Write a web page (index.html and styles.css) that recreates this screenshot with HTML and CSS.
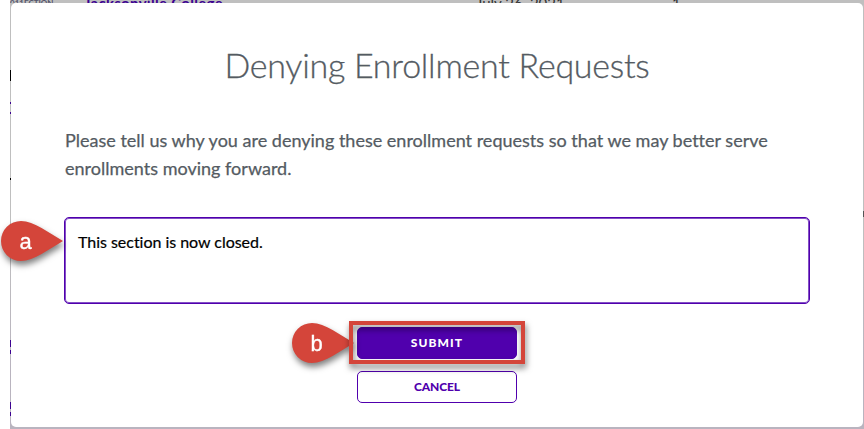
FILE: index.html
```html
<!DOCTYPE html>
<html lang="en">
<head>
    <meta charset="UTF-8">
    <meta name="viewport" content="width=device-width, initial-scale=1.0">
    <title>Denying Enrollment Requests</title>
    <link rel="stylesheet" href="styles.css">
</head>
<body>
    <div class="backdrop">
        <div class="table-row">
            <span class="row-code">011ECTION</span>
            <span class="row-school">Jacksonville College</span>
            <span class="row-date">July 26, 2021</span>
            <span class="row-count">1</span>
        </div>

        <main class="modal">
            <h1>Denying Enrollment Requests</h1>
            <p>Please tell us why you are denying these enrollment requests so that we may better serve enrollments moving forward.</p>
            <div class="field">
                <textarea spellcheck="false">This section is now closed.</textarea>
                <svg class="callout callout-a" width="72" height="56" viewBox="0 0 72 56">
                    <path d="M63 24C49 16 34 4 21 4a20 20 0 0 0 0 40c13 0 28-12 42-20z"/>
                    <text x="25.5" y="32" text-anchor="middle">a</text>
                </svg>
            </div>
            <div class="actions">
                <div class="submit-wrap">
                    <button class="submit">SUBMIT</button>
                    <svg class="callout callout-b" width="72" height="56" viewBox="0 0 72 56">
                        <path d="M63 24C49 16 34 4 21 4a20 20 0 0 0 0 40c13 0 28-12 42-20z"/>
                        <text x="25.5" y="32" text-anchor="middle">b</text>
                    </svg>
                    <div class="highlight"></div>
                </div>
                <button class="cancel">CANCEL</button>
            </div>
        </main>

        <!-- Bits of the table that stick out past the modal -->
        <i class="peek peek-heading"></i>
        <i class="peek peek-link"></i>
        <i class="peek peek-link peek-link-end"></i>
        <i class="peek peek-text"></i>
        <i class="peek peek-row"></i>
        <i class="peek peek-row peek-row-last"></i>
        <i class="peek peek-right"></i>
    </div>
</body>
</html>
```

FILE: styles.css
```css
/* General */
* {
    box-sizing: border-box;
}

body {
    margin: 0;
    background-color: #fff;
    color: #545b62;
    font-family: Lato, "Open Sans", sans-serif;
    font-variant-ligatures: none;
    overflow: hidden;
}

.backdrop {
    position: relative;
    height: 429px;
    margin-left: 10px;
    padding: 0 1px 2px;
    background: linear-gradient(#bfbfbf 55%, #b9b4bf 85%);
}

/* Table row behind the modal */
.table-row {
    display: grid;
    grid-template-columns: 74px 392px 196px 1fr;
    height: 3px;
    margin-left: -1px;
    overflow: hidden;
    line-height: 16px;
    white-space: nowrap;
}

.table-row span {
    margin-top: -5px;
}

.row-code {
    color: #55556b;
    font-size: 8px;
    font-weight: bold;
}

.row-school {
    color: #3c0291;
    font-size: 15px;
    font-weight: bold;
    letter-spacing: 0.3px;
}

.row-date,
.row-count {
    color: #333;
    font-size: 15px;
}

/* Modal */
.modal {
    height: 424px;
    padding: 40px 53px 0;
    background-color: #fff;
    border-radius: 5px;
}

h1 {
    margin: 0;
    font-size: 34px;
    font-weight: 300;
    line-height: 44px;
    text-align: center;
    letter-spacing: -0.25px;
    white-space: nowrap;
    -webkit-text-stroke: 0.3px #545b62;
}

p {
    width: 720px;
    margin: 39px 0 0 1px;
    font-size: 18px;
    line-height: 28px;
    letter-spacing: 0.01px;
    -webkit-text-stroke: 0.25px #545b62;
}

.field {
    position: relative;
    height: 87px;
    margin-top: 35px;
}

textarea {
    display: block;
    width: 746px;
    height: 87px;
    padding: 14px 13px;
    border: 1px solid #5000ad;
    border-radius: 5px;
    box-shadow: inset 0 0 0 1px #8450c6;
    outline: none;
    resize: none;
    color: #000;
    font-family: inherit;
    font-size: 16px;
    font-variant-ligatures: none;
    letter-spacing: -0.03px;
    line-height: 20px;
    -webkit-text-stroke: 0.2px #000;
}

.actions {
    display: flex;
    flex-direction: column;
    align-items: center;
    gap: 12px;
    margin-top: 23px;
}

.submit-wrap {
    position: relative;
    height: 32px;
}

button {
    display: block;
    width: 160px;
    height: 32px;
    padding: 0 0 2px;
    border: 1px solid #5000ad;
    border-radius: 5px;
    font-family: inherit;
    font-size: 12px;
    font-weight: 900;
}

.submit {
    background-color: #5000ad;
    color: #fff;
    letter-spacing: 1.1px;
}

.cancel {
    background-color: #fff;
    color: #5000ad;
    letter-spacing: -0.1px;
}

/* Callouts */
.highlight {
    position: absolute;
    top: -6px;
    left: -8px;
    width: 176px;
    height: 43px;
    border: 4px solid #d4453a;
    filter: drop-shadow(1px 4px 3px rgba(0, 0, 0, 0.55));
}

.callout {
    position: absolute;
    filter: drop-shadow(1px 4px 3px rgba(0, 0, 0, 0.5));
}

.callout path {
    fill: #d4453a;
}

.callout text {
    fill: #fff;
    stroke: #fff;
    stroke-width: 0.3px;
    font-family: "Liberation Sans", Arial, sans-serif;
    font-size: 22px;
}

.callout-a {
    top: 0;
    left: -64px;
}

.callout-b {
    top: -8px;
    left: -66px;
}

/* Page edges */
.peek {
    position: absolute;
    left: 0;
    width: 1px;
    background-color: #3c0291;
}

.peek-heading {
    top: 70px;
    height: 11px;
    background-color: #000;
}

.peek-link {
    top: 102px;
    height: 2px;
}

.peek-link-end {
    top: 112px;
}

.peek-text {
    top: 178px;
    height: 2px;
    background-color: #000;
}

.peek-row {
    top: 340px;
    height: 14px;
    background: linear-gradient(#3c0291 50%, #b9b4bf 50%, #b9b4bf 70%, #3c0291 70%);
}

.peek-row-last {
    top: 402px;
}

.peek-right {
    top: 211px;
    right: 0;
    left: auto;
    height: 6px;
    background-color: #555;
}
```
